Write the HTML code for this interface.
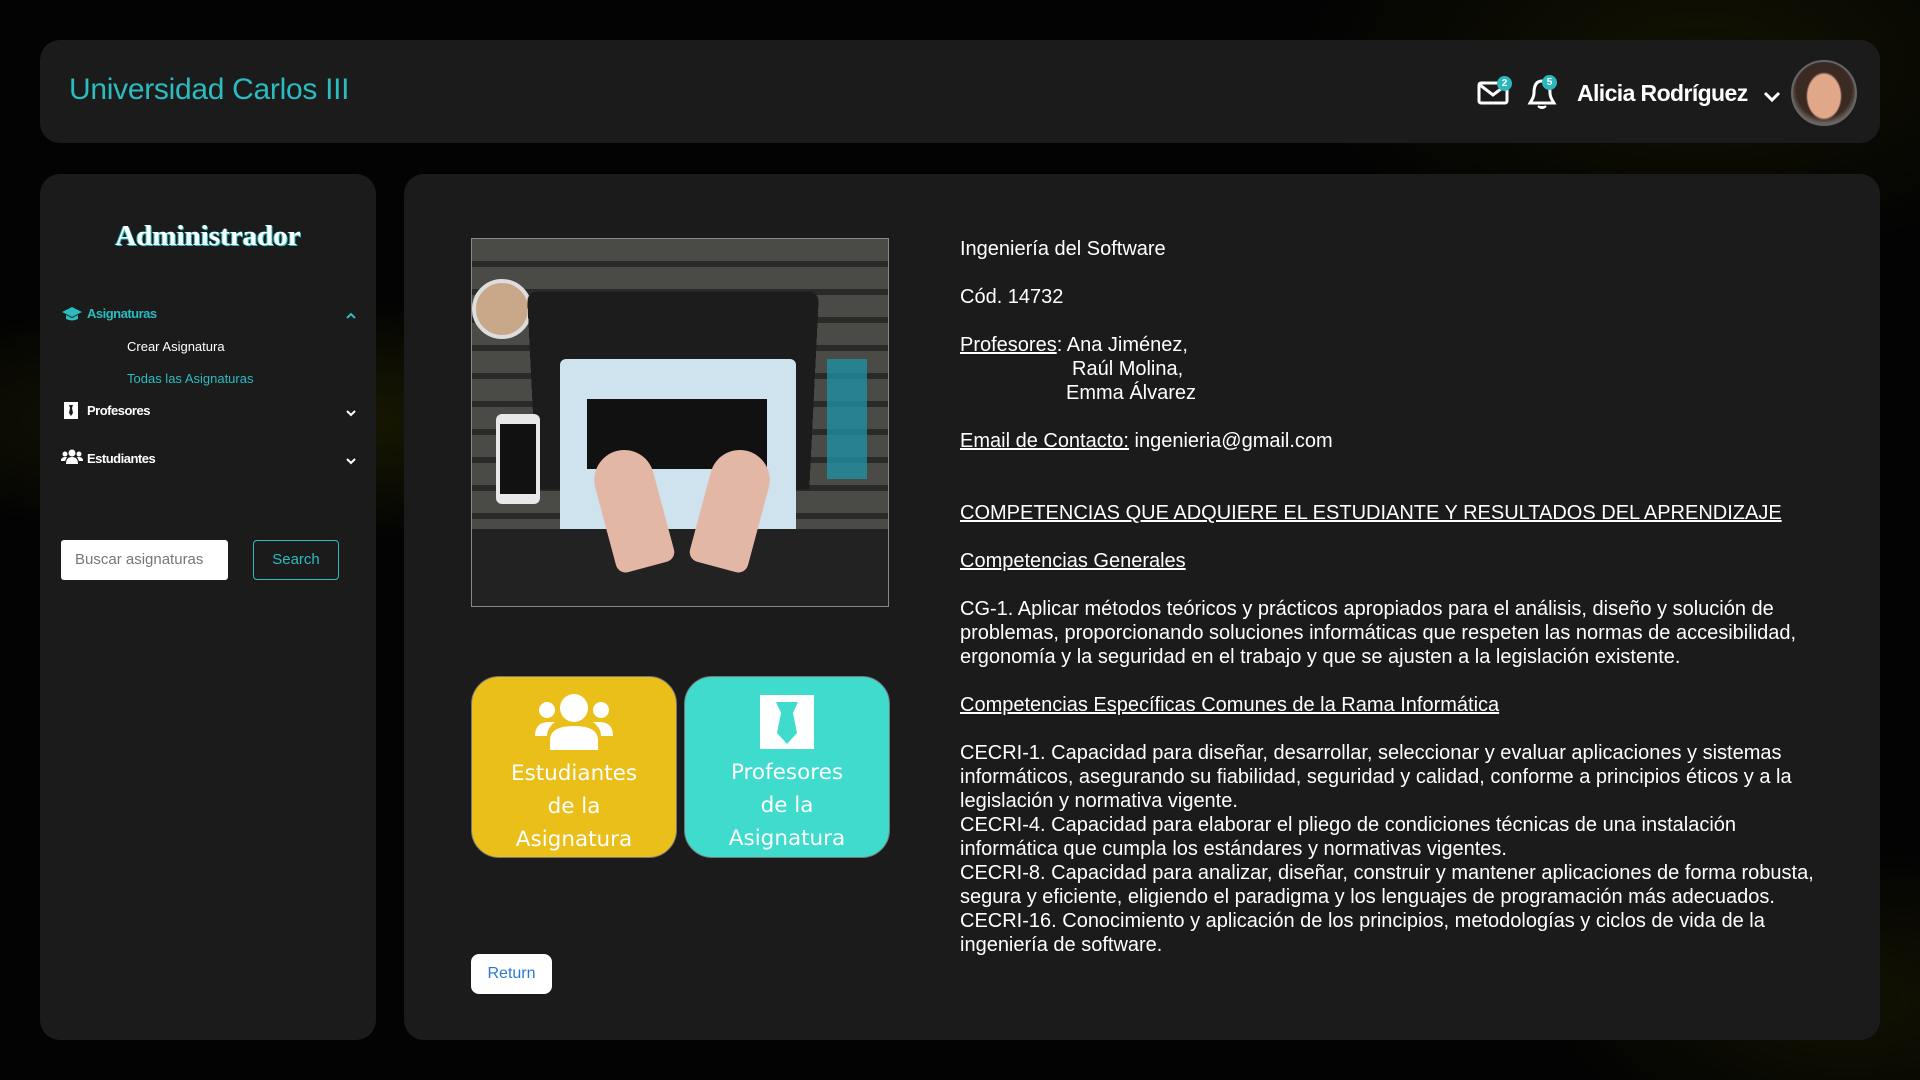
<!DOCTYPE html>
<html><head><meta charset="utf-8"><style>
*{box-sizing:border-box;margin:0;padding:0}
body{width:1920px;height:1080px;overflow:hidden;background:#000;font-family:"Liberation Sans",Arial,sans-serif;color:#fff;position:relative}
.bg{position:absolute;inset:0;background:radial-gradient(ellipse 500px 120px at 300px 420px,rgba(90,90,0,.25),transparent),radial-gradient(ellipse 400px 200px at 1700px 60px,rgba(80,80,0,.2),transparent),radial-gradient(ellipse 300px 150px at 1850px 1000px,rgba(80,80,0,.2),transparent),#030303}
.panel{position:absolute;background:#1b1b1b;border-radius:20px}
.abs{position:absolute}
.side a{position:absolute;font-size:13px;white-space:nowrap}
.txt{position:absolute;left:960px;top:237px;font-size:20px;line-height:24px;white-space:nowrap;color:#fff}
.txt p{margin-bottom:24px}
u{text-decoration:underline}
.card{position:absolute;top:676px;width:206px;height:182px;border-radius:28px;border:1px solid #777;text-align:center;font-family:"DejaVu Sans","Liberation Sans",sans-serif;font-size:21.5px;line-height:33px;color:#fff}
.badge{position:absolute;width:15px;height:15px;border-radius:50%;background:#2bb8bd;color:#fff;font-size:10px;font-weight:bold;text-align:center;line-height:15px}
</style></head><body>
<div class="bg"></div>
<div class="panel" style="left:40px;top:40px;width:1840px;height:103px"></div>
<div class="abs" style="left:69px;top:73px;font-size:30px;color:#2bbcc0;letter-spacing:-0.3px">Universidad Carlos III</div>
<svg class="abs" style="left:1477px;top:80px" width="32" height="26" viewBox="0 0 32 26"><rect x="2" y="3" width="28" height="20" rx="2" fill="none" stroke="#fff" stroke-width="3"/><path d="M3 5 L16 15 L29 5" fill="none" stroke="#fff" stroke-width="3"/></svg>
<div class="badge" style="left:1497px;top:76px">2</div>
<svg class="abs" style="left:1527px;top:78px" width="30" height="32" viewBox="0 0 30 32"><path d="M15 3 C8 3 7 10 7 15 C7 20 4 23 3 25 L27 25 C26 23 23 20 23 15 C23 10 22 3 15 3 Z" fill="none" stroke="#fff" stroke-width="3"/><path d="M11 28 Q15 32 19 28" fill="#fff" stroke="#fff" stroke-width="2"/></svg>
<div class="badge" style="left:1542px;top:75px">5</div>
<div class="abs" style="left:1577px;top:80px;font-size:23px;font-weight:bold;font-family:'Liberation Sans',sans-serif;letter-spacing:-0.6px">Alicia Rodríguez</div>
<svg class="abs" style="left:1763px;top:91px" width="18" height="12" viewBox="0 0 18 12"><path d="M2 2 L9 9 L16 2" fill="none" stroke="#fff" stroke-width="3"/></svg>
<div class="abs" style="left:1791px;top:60px;width:66px;height:66px;border-radius:50%;border:2px solid #666;background:radial-gradient(ellipse 18px 24px at 50% 55%,#e0a78a 90%,transparent 100%),radial-gradient(circle at 50% 45%,#3a2a22 60%,#d8d8d8 100%);"></div>

<div class="panel side" style="left:40px;top:174px;width:336px;height:866px">
<div class="abs" style="left:0;width:336px;top:46px;text-align:center;font-family:'Liberation Serif',serif;font-weight:bold;font-size:29px;color:#fff;text-shadow:1px 1px 0 #2bbcc0,-1px 0 0 #2bbcc0">Administrador</div>
<svg class="abs" style="left:22px;top:133px" width="20" height="14" viewBox="0 0 20 14"><path d="M10 0 L20 5 L10 10 L0 5Z M4 8 L4 12 Q10 15 16 12 L16 8 L10 11Z" fill="#2bbcc0"/></svg>
<a style="left:47px;top:132px;color:#2bbcc0;font-weight:bold;letter-spacing:-0.5px">Asignaturas</a>
<svg class="abs" style="left:306px;top:138px" width="10" height="7" viewBox="0 0 10 7"><path d="M1 6 L5 2 L9 6" fill="none" stroke="#2bbcc0" stroke-width="2"/></svg>
<a style="left:87px;top:165px;color:#fff">Crear Asignatura</a>
<a style="left:87px;top:197px;color:#2bbcc0">Todas las Asignaturas</a>
<svg class="abs" style="left:24px;top:228px" width="14" height="17" viewBox="0 0 14 17"><rect width="14" height="17" fill="#fff"/><path d="M5 3 L9 3 L8 6 L9 11 L7 14 L5 11 L6 6Z" fill="#1b1b1b"/></svg>
<a style="left:47px;top:229px;color:#fff;font-weight:bold;letter-spacing:-0.5px">Profesores</a>
<svg class="abs" style="left:306px;top:236px" width="10" height="7" viewBox="0 0 10 7"><path d="M1 1 L5 5 L9 1" fill="none" stroke="#fff" stroke-width="2"/></svg>
<svg class="abs" style="left:21px;top:275px" width="22" height="15" viewBox="0 0 22 15"><circle cx="11" cy="4" r="3.5" fill="#fff"/><circle cx="4" cy="5" r="2.5" fill="#fff"/><circle cx="18" cy="5" r="2.5" fill="#fff"/><path d="M5 15 Q5 8 11 8 Q17 8 17 15Z M0 12 Q0 8 4 8 L6 8 L4 12Z M22 12 Q22 8 18 8 L16 8 L18 12Z" fill="#fff"/></svg>
<a style="left:47px;top:277px;color:#fff;font-weight:bold;letter-spacing:-0.5px">Estudiantes</a>
<svg class="abs" style="left:306px;top:284px" width="10" height="7" viewBox="0 0 10 7"><path d="M1 1 L5 5 L9 1" fill="none" stroke="#fff" stroke-width="2"/></svg>
<div class="abs" style="left:21px;top:366px;width:167px;height:40px;background:#fff;border-radius:3px;color:#777;font-size:15px;line-height:40px;padding-left:14px">Buscar asignaturas</div>
<div class="abs" style="left:213px;top:366px;width:86px;height:40px;border:1px solid #2bbcc0;border-radius:4px;color:#2bbcc0;font-size:15px;line-height:38px;text-align:center">Search</div>
</div>

<div class="panel" style="left:404px;top:174px;width:1476px;height:866px"></div>
<div class="abs" style="left:471px;top:238px;width:418px;height:369px;border:1px solid #888;overflow:hidden;background:repeating-linear-gradient(180deg,#4a4a46 0 22px,#2a2a28 22px 28px)">
 <div class="abs" style="left:0;top:40px;width:60px;height:60px;border-radius:50%;background:#c9a88a;border:4px solid #ddd"></div>
 <div class="abs" style="left:60px;top:55px;width:282px;height:200px;background:#1c1c1c;border-radius:10px 10px 0 0;transform:perspective(400px) rotateX(-8deg)"></div>
 <div class="abs" style="left:88px;top:120px;width:236px;height:190px;background:#cfe3ee;border-radius:6px"></div>
 <div class="abs" style="left:115px;top:160px;width:180px;height:70px;background:#111"></div>
 <div class="abs" style="left:24px;top:175px;width:44px;height:90px;background:#e8e8e8;border-radius:6px"></div>
 <div class="abs" style="left:28px;top:185px;width:36px;height:70px;background:#111"></div>
 <div class="abs" style="left:0;top:290px;width:418px;height:80px;background:#222"></div>
 <div class="abs" style="left:130px;top:210px;width:60px;height:120px;background:#e3b7a6;border-radius:30px 30px 10px 10px;transform:rotate(-15deg)"></div>
 <div class="abs" style="left:230px;top:210px;width:60px;height:120px;background:#e3b7a6;border-radius:30px 30px 10px 10px;transform:rotate(15deg)"></div>
 <div class="abs" style="left:355px;top:120px;width:40px;height:120px;background:#1f8fa0;opacity:.8"></div>
</div>
<div class="card" style="left:471px;background:#ebbf1a">
<svg style="margin-top:17px" width="78" height="56" viewBox="0 0 78 56"><circle cx="39" cy="14" r="14" fill="#fff"/><circle cx="12" cy="16" r="8" fill="#fff"/><circle cx="66" cy="16" r="8" fill="#fff"/><path d="M15 56 L15 46 Q15 32 39 32 Q63 32 63 46 L63 56Z" fill="#fff"/><path d="M0 42 Q0 28 14 28 L20 28 Q12 34 12 42Z M78 42 Q78 28 64 28 L58 28 Q66 34 66 42Z" fill="#fff"/></svg>
<div style="margin-top:-3px">Estudiantes<br>de la<br>Asignatura</div></div>
<div class="card" style="left:684px;background:#3fdbcc">
<svg style="margin-top:18px" width="54" height="54" viewBox="0 0 54 54"><rect width="54" height="54" fill="#fff"/><path d="M16 7 L38 7 L33 18 L37 38 L27 49 L17 38 L21 18Z" fill="#3fdbcc"/></svg>
<div style="margin-top:-3px">Profesores<br>de la<br>Asignatura</div></div>
<div class="abs" style="left:471px;top:954px;width:81px;height:40px;background:#fff;border-radius:8px;color:#2a7ad0;font-size:16px;line-height:40px;text-align:center">Return</div>

<div class="txt">
<p>Ingeniería del Software</p>
<p>Cód. 14732</p>
<p><u>Profesores</u>: Ana Jiménez,<br><span style="padding-left:112px">Raúl Molina,</span><br><span style="padding-left:106px">Emma Álvarez</span></p>
<p><u>Email de Contacto:</u> ingenieria@gmail.com</p>
<p style="margin-top:48px"><u>COMPETENCIAS QUE ADQUIERE EL ESTUDIANTE Y RESULTADOS DEL APRENDIZAJE</u></p>
<p><u>Competencias Generales</u></p>
<p>CG-1. Aplicar métodos teóricos y prácticos apropiados para el análisis, diseño y solución de<br>problemas, proporcionando soluciones informáticas que respeten las normas de accesibilidad,<br>ergonomía y la seguridad en el trabajo y que se ajusten a la legislación existente.</p>
<p><u>Competencias Específicas Comunes de la Rama Informática</u></p>
<p>CECRI-1. Capacidad para diseñar, desarrollar, seleccionar y evaluar aplicaciones y sistemas<br>informáticos, asegurando su fiabilidad, seguridad y calidad, conforme a principios éticos y a la<br>legislación y normativa vigente.<br>CECRI-4. Capacidad para elaborar el pliego de condiciones técnicas de una instalación<br>informática que cumpla los estándares y normativas vigentes.<br>CECRI-8. Capacidad para analizar, diseñar, construir y mantener aplicaciones de forma robusta,<br>segura y eficiente, eligiendo el paradigma y los lenguajes de programación más adecuados.<br>CECRI-16. Conocimiento y aplicación de los principios, metodologías y ciclos de vida de la<br>ingeniería de software.</p>
</div>
</body></html>
